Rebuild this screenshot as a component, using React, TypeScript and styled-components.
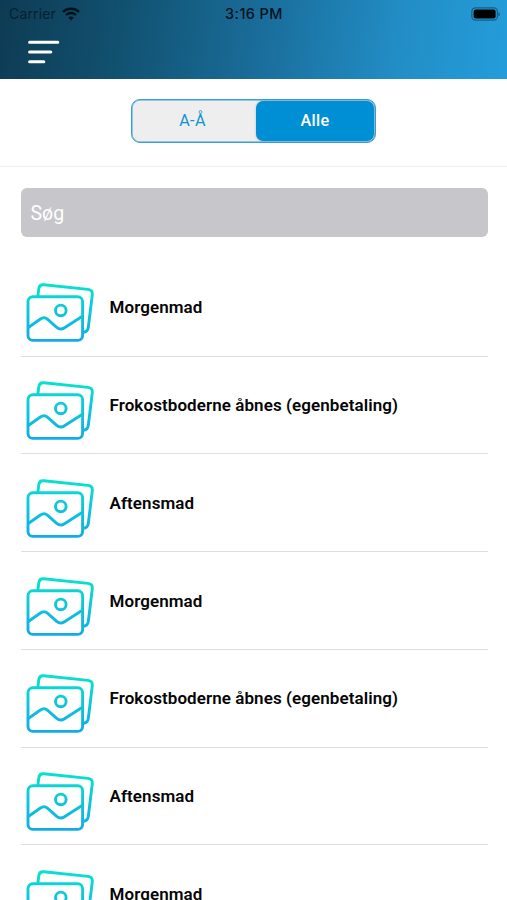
import React from "react";
import styled, { createGlobalStyle } from "styled-components";

const GlobalStyle = createGlobalStyle`
  * { box-sizing: border-box; }
  body { margin: 0; background: #fff; font-family: Roboto, sans-serif; overflow: hidden; }
`;

const Screen = styled.main`
  width: 100%;
  height: 900px;
  overflow: hidden;
  background: #fff;
`;

const Header = styled.header`
  height: 79.4px;
  background: linear-gradient(98deg, #0e3b54 0%, #115170 24%, #1a6f9d 53%, #228dc5 78%, #249dda 100%);
`;

const StatusBar = styled.div`
  display: grid;
  grid-template-columns: 1fr auto 1fr;
  align-items: center;
  height: 27px;
  padding: 0 7px 0 8px;
  font-family: Inter, sans-serif;
  font-size: 14px;
  line-height: 27px;
  color: #06121b;
`;

const Carrier = styled.div`
  display: flex;
  align-items: center;
  gap: 6px;
  padding-left: 1px;
  letter-spacing: 0.15px;
  color: #07202e;
`;

const Clock = styled.div`
  font-size: 14.4px;
  font-weight: 500;
  letter-spacing: 0.45px;
`;

const Power = styled.div`
  display: flex;
  justify-content: flex-end;
`;

const MenuButton = styled.button`
  display: block;
  margin: 12px 0 0 27px;
  padding: 0;
  border: 0;
  background: none;
  line-height: 0;
`;

const Filter = styled.section`
  display: flex;
  justify-content: center;
  height: 87.6px;
  padding-top: 19.6px;
  border-bottom: 1px solid #efefef;
`;

const Segments = styled.div`
  display: flex;
  width: 245px;
  height: 44px;
  padding: 1px;
  border: 1px solid #3b9fd6;
  border-radius: 9px;
  background: #eee;
  box-shadow: inset 0 0 0 0.5px #3b9fd6;
`;

const Segment = styled.button<{ $active?: boolean }>`
  flex: ${(p) => (p.$active ? "0 0 118px" : "1")};
  padding: ${(p) => (p.$active ? "0" : "0 4px 0 0")};
  border: 0;
  border-radius: 7px;
  background: ${(p) => (p.$active ? "#008fd5" : "transparent")};
  box-shadow: ${(p) => (p.$active ? "0 0 3px rgba(0, 0, 0, 0.2)" : "none")};
  color: ${(p) => (p.$active ? "#fff" : "#1592d3")};
  font: ${(p) => (p.$active ? 500 : 400)} 16.2px Roboto, sans-serif;
  letter-spacing: 0.3px;
`;

const Content = styled.section`
  padding: 21px 19.5px 0 20.5px;
`;

const Search = styled.input`
  display: block;
  width: 100%;
  height: 49px;
  padding: 2px 10px 0;
  border: 0;
  border-radius: 6px;
  outline: 0;
  background: #c7c6cb;
  font: 400 19.5px Roboto, sans-serif;
  &::placeholder { color: #fff; opacity: 1; }
`;

const List = styled.ul`
  margin: 22px 0 0;
  padding: 0;
  list-style: none;
`;

const Row = styled.li`
  display: flex;
  align-items: center;
  gap: 14.5px;
  height: 97.75px;
  padding: 10px 0 0 4.5px;
  border-bottom: 1px solid #dedede;
`;

const Title = styled.span`
  padding-bottom: 10px;
  color: #050505;
  font-size: 17px;
  font-weight: 600;
  line-height: 20px;
  letter-spacing: 0.08px;
  white-space: nowrap;
`;

const WifiIcon = () => (
  <svg width="18" height="14" viewBox="0 0 18 14" fill="none" stroke="#03121b" strokeWidth="2.3">
    <path d="M1 4.9C5.5 .7 12.5.7 17 4.9" />
    <path d="M4 8C6.8 5.3 11.2 5.3 14 8" />
    <path d="M9 13.6 6.2 10.6Q9 8.3 11.8 10.6Z" fill="#03121b" stroke="none" />
  </svg>
);

const BatteryIcon = () => (
  <svg width="30" height="14" viewBox="0 0 30 14">
    <rect x="1.8" y=".8" width="25.6" height="12.4" rx="3.6" fill="none" stroke="#155f85" strokeWidth="1.2" />
    <rect x="3.6" y="2.5" width="22" height="9" rx="2" fill="#000" />
    <path d="M28.4 5v4.4q1.5-.7 1.5-2.2T28.4 5Z" fill="#155f85" />
  </svg>
);

const MenuIcon = () => (
  <svg width="34" height="26" viewBox="0 0 34 26" stroke="#fff" strokeWidth="3" strokeLinecap="round">
    <path d="M2.6 3.2h28.2M2.6 13h21.2M2.6 22.8h14.2" />
  </svg>
);

const PhotosIcon = ({ id }: { id: string }) => (
  <svg width="70" height="62" viewBox="0 0 70 62" fill="none" stroke={`url(#${id})`} strokeWidth="2.9" strokeLinecap="round" strokeLinejoin="round">
    <defs>
      <linearGradient id={id} gradientUnits="userSpaceOnUse" x1="0" y1="2" x2="0" y2="61">
        <stop stopColor="#08e2cf" />
        <stop offset="1" stopColor="#13aae6" />
      </linearGradient>
    </defs>
    <path d="M12.9 15.2 13.8 7.6Q14.4 3.3 18.8 3.8L63 8.4Q67.8 9 67.3 13.6L63.3 46.5Q62.7 50.8 58.2 51.3" />
    <rect x="3" y="15.8" width="54.6" height="43.6" rx="4.8" />
    <circle cx="35.8" cy="29.4" r="5.3" />
    <path d="M3.3 46.5 15.4 38Q19.3 35.3 22.7 38.3L31.7 46.3Q35.4 49.5 39.5 46.7L57 35.5" />
  </svg>
);

const meals = [
  "Morgenmad",
  "Frokostboderne åbnes (egenbetaling)",
  "Aftensmad",
  "Morgenmad",
  "Frokostboderne åbnes (egenbetaling)",
  "Aftensmad",
  "Morgenmad",
];

export default function App() {
  return (
    <Screen>
      <GlobalStyle />
      <Header>
        <StatusBar>
          <Carrier>Carrier <WifiIcon /></Carrier>
          <Clock>3:16 PM</Clock>
          <Power><BatteryIcon /></Power>
        </StatusBar>
        <MenuButton aria-label="Menu"><MenuIcon /></MenuButton>
      </Header>
      <Filter>
        <Segments>
          <Segment>A-Å</Segment>
          <Segment $active>Alle</Segment>
        </Segments>
      </Filter>
      <Content>
        <Search placeholder="Søg" />
        <List>
          {meals.map((meal, i) => (
            <Row key={i}>
              <PhotosIcon id={`photos-${i}`} />
              <Title>{meal}</Title>
            </Row>
          ))}
        </List>
      </Content>
    </Screen>
  );
}
